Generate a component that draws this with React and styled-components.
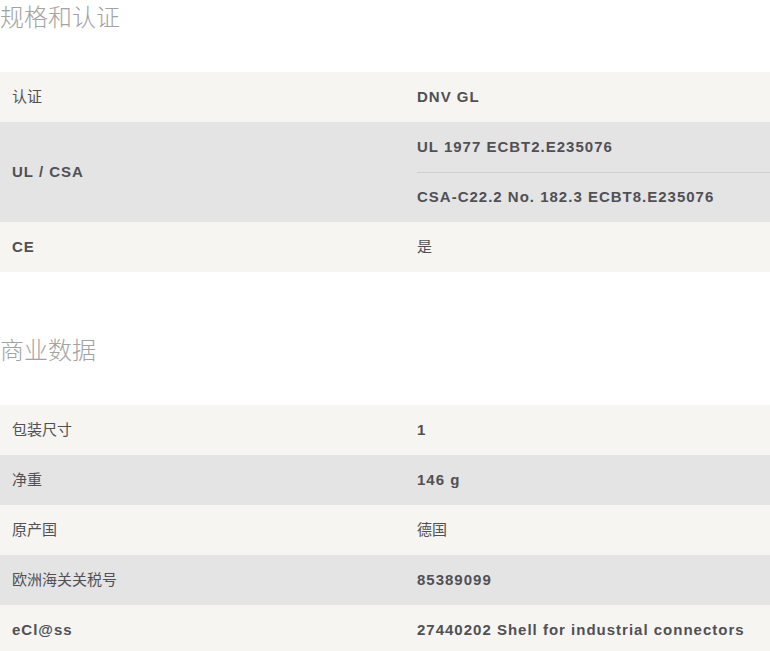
import React from 'react'
import styled, { createGlobalStyle } from 'styled-components'

const GlobalStyle = createGlobalStyle`
  body {
    margin: 0;
    background: #fff;
    font-family: "Liberation Sans", "Noto Sans CJK SC", sans-serif;
  }
`

const Page = styled.div`
  width: 770px;
`

const Section = styled.section`
  margin-bottom: 61px;
`

const Heading = styled.h2`
  margin: 0 0 42px;
  padding-top: 2px;
  height: 28px;
  font-family: "Noto Sans CJK SC", sans-serif;
  font-weight: 300;
  font-size: 24px;
  line-height: 28px;
  color: #a3a3a3;
`

const Row = styled.div`
  display: grid;
  grid-template-columns: 405px 1fr;
  background: ${p => (p.$shade ? '#e4e4e4' : '#f6f5f1')};
`

const cellText = p =>
  p.$cjk
    ? `
      font-family: "Noto Sans CJK SC", sans-serif;
      font-size: 15px;
      font-weight: 400;
      padding-bottom: 4px;
    `
    : `
      font-family: "Liberation Sans", sans-serif;
      font-size: 15px;
      font-weight: 700;
      letter-spacing: 1px;
      padding-bottom: 2px;
    `

const Label = styled.div`
  display: flex;
  align-items: center;
  padding-left: 12px;
  padding-right: 12px;
  color: #505055;
  ${cellText}
`

const Values = styled.div`
  padding-left: 12px;
`

const Value = styled.div`
  box-sizing: border-box;
  height: 50px;
  display: flex;
  align-items: center;
  color: #505055;
  ${cellText}
  & + & {
    border-top: 1px solid #cfcfcf;
  }
`

const isCjk = s => /[\u4e00-\u9fff]/.test(s)

const sections = [
  {
    title: '规格和认证',
    rows: [
      ['认证', ['DNV GL']],
      ['UL / CSA', ['UL 1977 ECBT2.E235076', 'CSA-C22.2 No. 182.3 ECBT8.E235076']],
      ['CE', ['是']],
    ],
  },
  {
    title: '商业数据',
    rows: [
      ['包装尺寸', ['1']],
      ['净重', ['146 g']],
      ['原产国', ['德国']],
      ['欧洲海关关税号', ['85389099']],
      ['eCl@ss', ['27440202 Shell for industrial connectors']],
    ],
  },
]

export default function App() {
  return (
    <Page>
      <GlobalStyle />
      {sections.map(section => (
        <Section key={section.title}>
          <Heading>{section.title}</Heading>
          {section.rows.map(([label, values], i) => (
            <Row key={label} $shade={i % 2 === 1}>
              <Label $cjk={isCjk(label)}>{label}</Label>
              <Values>
                {values.map(v => (
                  <Value key={v} $cjk={isCjk(v)}>{v}</Value>
                ))}
              </Values>
            </Row>
          ))}
        </Section>
      ))}
    </Page>
  )
}
